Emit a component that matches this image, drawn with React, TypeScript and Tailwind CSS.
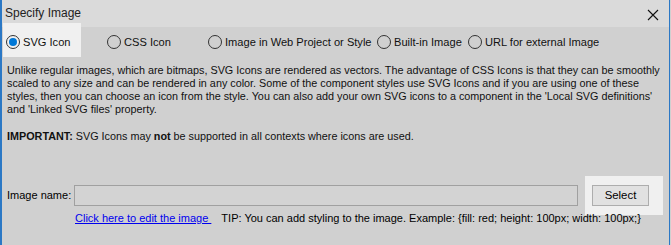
import React from "react";

const Radio = ({ checked }: { checked?: boolean }) => (
  <span className="inline-flex w-[14px] h-[14px] rounded-full border border-[#333333] items-center justify-center bg-transparent shrink-0">
    {checked ? <span className="w-[8px] h-[8px] rounded-full bg-[#0078d7]" /> : null}
  </span>
);

export default function App() {
  const seg = { fontFamily: '"Liberation Sans", Arial, sans-serif' };
  const tah = { fontFamily: '"Liberation Sans", Arial, sans-serif' };
  return (
    <div className="w-[671px] h-[245px] bg-[#d0d0d0] overflow-hidden">
      <div className="w-[670px] h-[245px] border-l-2 border-r border-[#2b78c5] bg-[#d0d0d0] flex flex-col text-[#000]">
        <div className="h-[27px] shrink-0 bg-[#dadada] flex items-start justify-between pl-[3px] pr-[10px] pt-[5px]" style={seg}>
          <span className="text-[12px] leading-[16px] text-[#222] whitespace-nowrap">Specify Image</span>
          <svg width="12" height="12" viewBox="0 0 12 12" className="mt-[4px]">
            <path d="M1 1 L11 11 M11 1 L1 11" stroke="#111" strokeWidth="1.1" />
          </svg>
        </div>
        <div className="flex items-center h-[30px] shrink-0 text-[11.1px] text-[#111] whitespace-nowrap" style={seg}>
          <div className="relative -mt-[4px] ml-[1px] h-[34px] w-[78px] shrink-0 bg-[#f0f0f0] flex items-center pl-[3px] pt-[4px] gap-[3px]">
            <Radio checked />
            <span>SVG Icon</span>
          </div>
          <div className="flex items-center gap-[3px] ml-[26px] w-[101px] shrink-0">
            <Radio />
            <span>CSS Icon</span>
          </div>
          <div className="flex items-center gap-[3px] w-[169px] shrink-0">
            <Radio />
            <span>Image in Web Project or Style</span>
          </div>
          <div className="flex items-center gap-[3px] w-[91px] shrink-0">
            <Radio />
            <span>Built-in Image</span>
          </div>
          <div className="flex items-center gap-[3px] shrink-0">
            <Radio />
            <span>URL for external Image</span>
          </div>
        </div>
        <div className="pl-[5px] pt-[7px] text-[10.8px] leading-[13px] text-[#111]" style={tah}>
          <div className="whitespace-nowrap">Unlike regular images, which are bitmaps, SVG Icons are rendered as vectors. The advantage of CSS Icons is that they can be smoothly</div>
          <div className="whitespace-nowrap">scaled to any size and can be rendered in any color. Some of the component styles use SVG Icons and if you are using one of these</div>
          <div className="whitespace-nowrap">styles, then you can choose an icon from the style. You can also add your own SVG icons to a component in the 'Local SVG definitions'</div>
          <div className="whitespace-nowrap">and 'Linked SVG files' property.</div>
          <div className="h-[14px]" />
          <div className="whitespace-nowrap"><b>IMPORTANT:</b> SVG Icons may <b>not</b> be supported in all contexts where icons are used.</div>
        </div>
        <div className="flex items-center mt-[42px] pl-[5px] text-[11px] shrink-0" style={seg}>
          <span className="w-[67px] shrink-0 whitespace-nowrap">Image name:</span>
          <div className="w-[504px] h-[21px] shrink-0 border border-[#a0a0a0] bg-[#d3d3d3]" />
          <div className="ml-[7px] -my-[9px] w-[78px] h-[39px] shrink-0 bg-[#f0f0f0] flex items-center pl-[7px]">
            <div className="w-[57px] h-[21px] border border-[#adadad] bg-[#e1e1e1] flex items-center justify-center text-[11.4px]">Select</div>
          </div>
        </div>
        <div className="flex items-center pl-[73px] mt-[4px] text-[11px] shrink-0" style={seg}>
          <span className="text-[#0000ee] underline whitespace-pre shrink-0">Click here to edit the image </span>
          <span className="ml-[10px] whitespace-nowrap shrink-0">TIP: You can add styling to the image. Example: {"{fill: red; height: 100px; width: 100px;}"}</span>
        </div>
      </div>
    </div>
  );
}
